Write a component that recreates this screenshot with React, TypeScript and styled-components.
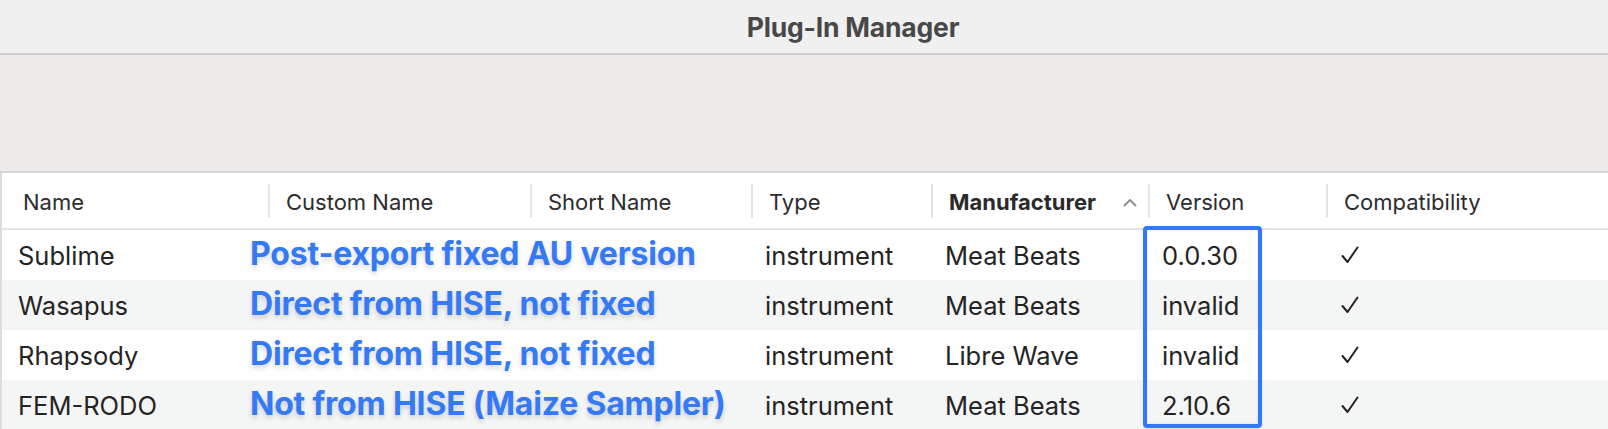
import styled, { createGlobalStyle } from 'styled-components';

const GlobalStyle = createGlobalStyle`
  html, body {
    margin: 0;
    padding: 0;
    background: #ffffff;
    overflow: hidden;
  }
  body {
    font-family: Inter, "Open Sans", "Liberation Sans", sans-serif;
    -webkit-font-smoothing: antialiased;
  }
`;

const Window = styled.div`
  width: 1608px;
  height: 429px;
  display: flex;
  flex-direction: column;
  overflow: hidden;
`;

const TitleBar = styled.div`
  height: 53px;
  flex: none;
  display: flex;
  align-items: center;
  justify-content: center;
  padding-left: 98px;
  background: #f0f0f0;
  border-bottom: 2px solid #cfcfcf;
  color: #484848;
  font-size: 26.5px;
  font-weight: 700;
  letter-spacing: -0.2px;
`;

const Toolbar = styled.div`
  height: 116px;
  flex: none;
  background: #ecebea;
  border-bottom: 2px solid #d6d6d6;
`;

const Table = styled.div`
  flex: 1;
  position: relative;
  background: #ffffff;
  border-left: 2px solid #dddddd;
`;

const COLUMNS = '266px 262px 221px 180px 217px 178px 1fr';

const HeaderRow = styled.div`
  display: grid;
  grid-template-columns: ${COLUMNS};
  height: 55px;
  align-items: center;
  border-bottom: 2px solid #e3e3e3;
`;

const HeaderCell = styled.div<{ $first?: boolean; $sorted?: boolean }>`
  height: 34px;
  box-sizing: border-box;
  display: flex;
  align-items: center;
  padding-top: 3px;
  padding-left: ${p => (p.$first ? '21px' : '16px')};
  padding-right: 16px;
  border-left: ${p => (p.$first ? 'none' : '2px solid #e4e4e4')};
  font-size: 22px;
  font-weight: ${p => (p.$sorted ? 700 : 400)};
  color: ${p => (p.$sorted ? '#2a2a2a' : '#2c2c2c')};
  justify-content: space-between;
`;

const Caret = styled.svg`
  width: 14px;
  height: 9px;
  margin-right: -5px;
`;

const Row = styled.div<{ $alt?: boolean }>`
  display: grid;
  grid-template-columns: ${COLUMNS};
  height: 50px;
  align-items: center;
  background: ${p => (p.$alt ? '#f4f5f5' : '#ffffff')};
`;

const Cell = styled.div<{ $first?: boolean }>`
  padding-left: ${p => (p.$first ? '16px' : '14px')};
  font-size: 25.5px;
  color: #242424;
  white-space: nowrap;
`;

const Note = styled.div`
  margin-left: -32px;
  margin-top: -3px;
  font-size: 32px;
  font-weight: 700;
  letter-spacing: -0.2px;
  color: #3479f6;
  white-space: nowrap;
  text-shadow: 0 3px 5px rgba(0, 0, 0, 0.16);
`;

const Check = styled.svg`
  width: 18px;
  height: 18px;
  display: block;
  margin-left: 1px;
`;

const VersionBox = styled.div`
  position: absolute;
  left: 1141px;
  top: 53px;
  width: 111px;
  height: 194px;
  border: 4px solid #3478f6;
  border-radius: 4px;
  box-shadow: inset 0 0 3px rgba(0, 0, 0, 0.12), 0 1px 3px rgba(0, 0, 0, 0.1);
  pointer-events: none;
`;

const headers = ['Name', 'Custom Name', 'Short Name', 'Type', 'Manufacturer', 'Version', 'Compatibility'];

const rows = [
  { name: 'Sublime', note: 'Post-export fixed AU version', maker: 'Meat Beats', version: '0.0.30' },
  { name: 'Wasapus', note: 'Direct from HISE, not fixed', maker: 'Meat Beats', version: 'invalid' },
  { name: 'Rhapsody', note: 'Direct from HISE, not fixed', maker: 'Libre Wave', version: 'invalid' },
  { name: 'FEM-RODO', note: 'Not from HISE (Maize Sampler)', maker: 'Meat Beats', version: '2.10.6' },
];

function App() {
  return (
    <>
      <GlobalStyle />
      <Window>
        <TitleBar>Plug-In Manager</TitleBar>
        <Toolbar />
        <Table>
          <HeaderRow>
            {headers.map((h, i) => (
              <HeaderCell key={h} $first={i === 0} $sorted={h === 'Manufacturer'}>
                {h}
                {h === 'Manufacturer' && (
                  <Caret viewBox="0 0 14 9">
                    <path d="M1.5 7.5 L7 2 L12.5 7.5" fill="none" stroke="#8a8a8a" strokeWidth="1.8" strokeLinecap="round" strokeLinejoin="round" />
                  </Caret>
                )}
              </HeaderCell>
            ))}
          </HeaderRow>

          {rows.map((r, i) => (
            <Row key={r.name} $alt={i % 2 === 1}>
              <Cell $first>{r.name}</Cell>
              <Cell><Note>{r.note}</Note></Cell>
              <Cell />
              <Cell>instrument</Cell>
              <Cell>{r.maker}</Cell>
              <Cell>{r.version}</Cell>
              <Cell>
                <Check viewBox="0 0 18 18">
                  <path d="M1.5 10 L6.5 16 L16.5 1.5" fill="none" stroke="#222" strokeWidth="2" strokeLinecap="round" strokeLinejoin="round" />
                </Check>
              </Cell>
            </Row>
          ))}

          <VersionBox />
        </Table>
      </Window>
    </>
  )
}

export default App
